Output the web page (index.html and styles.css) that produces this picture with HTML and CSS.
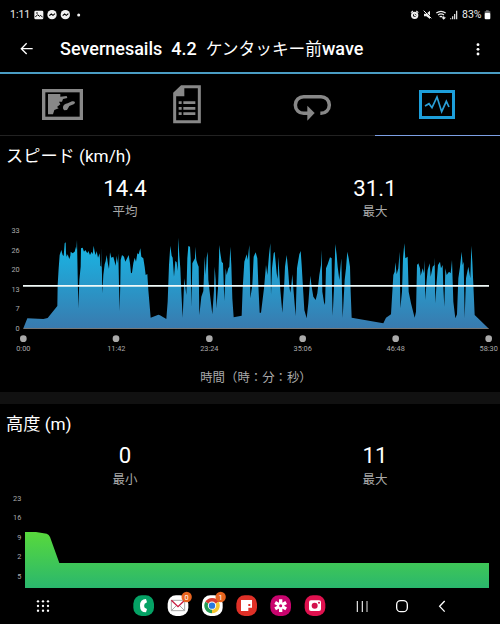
FILE: index.html
```html
<!DOCTYPE html>
<html lang="ja">
<head>
    <meta charset="UTF-8">
    <meta name="viewport" content="width=device-width, initial-scale=1.0">
    <title>Severnesails</title>
    <link rel="stylesheet" href="styles.css">
</head>
<body>
    <div class="status-bar">
        <span class="clock">1:11</span>
        <svg class="status-left" width="50" height="12" viewBox="0 0 150 36">
            <rect x="1" y="5" width="27" height="26" rx="4" fill="#f2f2f2"/>
            <path d="M4 24l7-7 5 5 4-3 6 6" fill="none" stroke="#000" stroke-width="3"/>
            <circle cx="9" cy="12" r="2.5" fill="#000"/>
            <circle cx="54" cy="17" r="14" fill="#f2f2f2"/>
            <path d="M46 20l6-5 5 4 6-5" fill="none" stroke="#000" stroke-width="3.5"/>
            <circle cx="94" cy="17" r="14" fill="#f2f2f2"/>
            <path d="M86 20l6-5 5 4 6-5" fill="none" stroke="#000" stroke-width="3.5"/>
            <circle cx="134" cy="18" r="4.5" fill="#f2f2f2"/>
        </svg>
        <svg class="status-right" width="50" height="12" viewBox="0 0 150 36">
            <g fill="none" stroke="#eee" stroke-width="3.5">
                <circle cx="14" cy="19" r="8" stroke-width="6"/>
                <path d="M3 11l6-5M25 11l-6-5M14 15v5h4"/>
                <path d="M79 12q14-10 28 0M84 18q9-7 18 0M89 24q4-4 8 0"/>
                <path d="M101 22v8M97 25l4 5 5-5"/>
                <path d="M122 31v-3M128 31v-9M134 31V15M140 31V5"/>
            </g>
            <path d="M42 14h7l11-9v25l-11-8h-7z" fill="#eee"/>
            <path d="M43 5l23 23" stroke="#000" stroke-width="3"/>
            <path d="M41 5l23 23" stroke="#eee" stroke-width="3"/>
        </svg>
        <span class="battery">83%</span>
        <svg class="battery-icon" width="7" height="10" viewBox="0 0 21 30">
            <path d="M6 1h8v3h5v7H2V4h4z" fill="#777"/>
            <rect x="2" y="9" width="17" height="19" rx="3" fill="#fff"/>
        </svg>
    </div>

    <div class="app-bar">
        <svg class="back" width="14" height="14" viewBox="0 0 42 42">
            <path d="M38 20H4M20 4L4 20l16 16" fill="none" stroke="#fff" stroke-width="4"/>
        </svg>
        <h1><span class="latin">Severnesails  4.2  </span>ケンタッキー前<span class="latin wave">wave</span></h1>
        <svg class="more" width="4" height="13" viewBox="0 0 12 39">
            <g fill="#fff"><circle cx="6" cy="5" r="4.3"/><circle cx="6" cy="19" r="4.3"/><circle cx="6" cy="33" r="4.3"/></g>
        </svg>
    </div>

    <div class="tabs">
        <div class="tab">
            <svg width="125" height="61" viewBox="0 12 375 183">
                <rect x="131" y="62" width="113" height="83" fill="none" stroke="#888" stroke-width="10"/>
                <path d="M144 72h37v8l19-2 2 6-13 3-3 8h-9l4 8-10 8 5 4-13 5-4 13h-15z" fill="#888"/>
                <path d="M189 111q2-9 14-11l13-6q10-2 9 5l-4 4-13 5-7 12-8 1q-5-3-4-10z" fill="#888"/>
            </svg>
        </div>
        <div class="tab">
            <svg width="125" height="61" viewBox="375 12 375 183">
                <path d="M545 50h53v105h-74V70z" fill="none" stroke="#888" stroke-width="9"/>
                <path d="M523 71l24-22h6v30h-30z" fill="#888"/>
                <path d="M550 98h36M550 115h36M550 131h36M536 98h9M536 115h9M536 131h9" stroke="#888" stroke-width="8"/>
            </svg>
        </div>
        <div class="tab">
            <svg width="125" height="61" viewBox="0 12 375 183">
                <path d="M174 130h-13a25 25 0 0 1 0-50h52a25 25 0 0 1 0 50h-2" fill="none" stroke="#888" stroke-width="10.5"/>
                <path d="M172 107l22 22-22 23z" fill="#888"/>
            </svg>
        </div>
        <div class="tab active">
            <svg width="125" height="61" viewBox="375 12 375 183">
                <rect x="511.500" y="64.500" width="99" height="78" fill="none" stroke="#1d9fdb" stroke-width="9"/>
                <path d="M525 108l12-7 9 12 15-32 14 44 14-31 8 17" fill="none" stroke="#2a9fd8" stroke-width="5"/>
            </svg>
        </div>
    </div>

    <div class="section">
        <h2>スピード (km/h)</h2>
        <div class="stats">
            <div class="stat"><b>14.4</b><span>平均</span></div>
            <div class="stat"><b>31.1</b><span>最大</span></div>
        </div>
        <svg class="chart" width="500" height="135" viewBox="0 0 1500 405">
            <defs>
                <linearGradient id="blue" gradientUnits="userSpaceOnUse" x1="0" y1="50" x2="0" y2="310">
                    <stop offset="0" stop-color="#17b7e6"/>
                    <stop offset="1" stop-color="#397aae"/>
                </linearGradient>
            </defs>
            <g fill="url(#blue)">
                <path d="M70 310L82 280 130 282 143 279 172 243 173 180 176 130 179 90 184 75 188 90 191 93 194 55 197 52 198 85 200 95 203 88 208 102 211 92 212 80 218 85 224 80 228 65 229 75 231 45 233 150 235 250 238 165 242 125 243 70 248 68 252 80 256 75 262 85 265 78 270 90 275 80 278 88 281 62 284 80 287 90 290 78 294 98 299 85 301 122 304 125 304 68 306 150 307 205 310 150 314 118 317 108 320 90 324 118 327 132 330 82 334 98 340 95 344 110 347 122 350 92 353 115 355 85 357 180 359 258 361 170 362 105 366 90 372 95 376 110 382 98 386 90 390 115 393 145 396 143 400 115 404 98 408 110 412 85 416 88 421 70 424 95 430 100 434 125 437 150 442 147 445 195 448 230 452 278 475 269 480 271V310z"/>
                <path transform="translate(480)" d="M0 310V271L19 282 23 230 27 120 31 62 35 92 38 98 42 155 46 108 50 112 53 138 55 38 58 92 61 130 64 200 68 278 73 160 79 210 82 100 85 63 90 65 92 100 94 245 97 115 105 100 106 65 109 105 113 118 116 125 118 270 124 215 130 198 134 95 137 150 140 98 143 80 145 165 149 200 157 268 162 195 164 125 167 165 169 250 174 190 176 130 178 60 181 85 185 110 189 115 193 228 197 130 200 150 205 130 208 125 211 65 214 120 217 220 221 277 245 272 248 190 253 110 260 88 263 105 268 60 270 150 271 220 277 180 281 95 287 82 292 100 295 180 299 263 303 263 312 190 318 120 322 150 327 90 331 55 333 210 336 130 341 85 344 80 350 145 353 162 355 95 358 145 361 195 367 263 373 170 375 125 380 90 384 130 388 185 391 203 394 180 397 148 400 190 407 273 411 130 418 88 422 78 425 120 430 205 433 255 440 280 445 235 451 152 455 185 460 215 467 225 472 205 478 150 483 120 485 75 487 200 492 232 495 240 498 130 503 118 510 97V310z"/>
                <path transform="translate(990)" d="M0 310V97L5 100 6 200 8 272 12 190 16 57 20 90 23 125 28 165 34 100 36 200 38 278 44 165 48 130 52 80 56 100 60 125 62 200 65 278 160 295 168 278 183 268 187 200 190 150 194 140 196 112 200 148 205 130 209 80 211 250 216 200 219 100 223 55 226 100 233 95 236 200 243 235 254 278 258 260 261 120 265 115 270 130 272 152 278 130 282 145 284 105 286 225 290 165 293 135 299 115 302 155 308 125 313 120 314 98 316 235 320 170 324 120 330 110 333 130 338 120 340 190 343 245 346 130 350 150 357 140 362 145 366 105 370 230 376 280 381 268 385 160 390 125 395 80 398 120 401 110 404 280 408 160 415 125 421 160 424 62 427 110 431 200 434 270 475 310z"/>
            </g>
            <path d="M70 310.500H1466" stroke="#777" stroke-width="3"/>
            <path d="M69 182.500H1467" stroke="#f1faf8" stroke-width="5"/>
            <g fill="#aaa">
                <circle cx="70" cy="341" r="10"/><circle cx="348" cy="341" r="10"/><circle cx="628" cy="341" r="10"/>
                <circle cx="908" cy="341" r="10"/><circle cx="1187" cy="341" r="10"/><circle cx="1466" cy="341" r="10"/>
            </g>
            <g class="y-labels">
                <text x="59" y="24">33</text><text x="59" y="83">26</text><text x="59" y="142">20</text>
                <text x="59" y="201">13</text><text x="59" y="259">7</text><text x="59" y="318">0</text>
            </g>
            <g class="x-labels">
                <text x="70" y="378">0:00</text><text x="349" y="378">11:42</text><text x="628" y="378">23:24</text>
                <text x="908" y="378">35:06</text><text x="1187" y="378">46:48</text><text x="1466" y="378">58:30</text>
            </g>
        </svg>
        <div class="axis-title">時間（時：分：秒）</div>
    </div>

    <div class="section altitude">
        <h2>高度 (m)</h2>
        <div class="stats">
            <div class="stat"><b>0</b><span>最小</span></div>
            <div class="stat"><b>11</b><span>最大</span></div>
        </div>
        <svg class="chart" width="500" height="103" viewBox="0 0 1500 309">
            <defs>
                <linearGradient id="green" gradientUnits="userSpaceOnUse" x1="0" y1="141" x2="0" y2="309">
                    <stop offset="0" stop-color="#58d93c"/>
                    <stop offset="1" stop-color="#2ab76d"/>
                </linearGradient>
            </defs>
            <path d="M75 309V141H108L140 146Q147 148 150 156L178 234H1467V309z" fill="url(#green)"/>
            <g class="y-labels">
                <text x="64" y="47">23</text><text x="64" y="106">16</text><text x="64" y="165">9</text>
                <text x="64" y="223">2</text><text x="64" y="283">5</text>
            </g>
        </svg>
    </div>

    <div class="nav-bar">
        <svg width="500" height="36" viewBox="0 309 1500 108">
            <g fill="#fff">
                <circle cx="114" cy="349" r="3.500"/><circle cx="129" cy="349" r="3.500"/><circle cx="144" cy="349" r="3.500"/>
                <circle cx="114" cy="363" r="3.500"/><circle cx="129" cy="363" r="3.500"/><circle cx="144" cy="363" r="3.500"/>
                <circle cx="114" cy="377" r="3.500"/><circle cx="129" cy="377" r="3.500"/><circle cx="144" cy="377" r="3.500"/>
            </g>
            <!-- phone -->
            <rect x="400" y="331" width="62" height="62" rx="25" fill="#05a265"/>
            <path d="M438 342q-18 0-18 20t18 20l3-10-7-4q-3-6 0-12l7-4z" fill="#fff"/>
            <!-- mail -->
            <rect x="503" y="331" width="62" height="62" rx="25" fill="#fff"/>
            <path d="M514 346h40v31h-40zM514 377l15-15M554 377l-15-15" fill="none" stroke="#aaa" stroke-width="3"/>
            <path d="M514 346l20 19 20-19" fill="none" stroke="#c8193f" stroke-width="4"/>
            <!-- chrome -->
            <rect x="606" y="331" width="62" height="62" rx="25" fill="#fff"/>
            <path d="M636 362L616 350.500A23 23 0 0 1 656 350.500z" fill="#d83b30"/>
            <path d="M636 362L656 350.500A23 23 0 0 1 636 385z" fill="#f6c52e"/>
            <path d="M636 362L636 385A23 23 0 0 1 616 350.500z" fill="#259a52"/>
            <path d="M636 350h22v-2l-8-7h-14z" fill="#d83b30"/>
            <circle cx="636" cy="362" r="12.500" fill="#fff"/>
            <circle cx="636" cy="362" r="9.500" fill="#2878df"/>
            <!-- flipboard -->
            <rect x="709" y="331" width="62" height="62" rx="25" fill="#df3027"/>
            <path d="M723 345h33v23h-11v10h-22z" fill="#fff"/>
            <path d="M745 357h6v6h-6z" fill="#df3027"/>
            <!-- gallery -->
            <rect x="811" y="331" width="62" height="62" rx="25" fill="#c9046e"/>
            <path d="M842 343v38M825.500 352.500l33 19M825.500 371.500l33-19" stroke="#fff" stroke-width="10"/>
            <circle cx="842" cy="362" r="4.500" fill="#c9046e"/>
            <!-- camera -->
            <rect x="914" y="331" width="62" height="62" rx="25" fill="#e0114f"/>
            <rect x="927" y="346" width="36" height="32" rx="6" fill="#fff"/>
            <circle cx="944" cy="362" r="9" fill="#d3104c"/>
            <circle cx="957" cy="353" r="3" fill="#d3104c"/>
            <g fill="#e7641f"><circle cx="560" cy="336" r="15.500"/><circle cx="662" cy="336" r="15.500"/></g>
            <g class="badges"><text x="560" y="344">0</text><text x="662" y="344">1</text></g>
            <path d="M1072 348v33M1087 348v33" stroke="#eee" stroke-width="3.500"/>
            <path d="M1101 348v33" stroke="#888" stroke-width="5"/>
            <rect x="1190" y="347" width="32" height="33" rx="12" fill="none" stroke="#fff" stroke-width="4"/>
            <path d="M1334 348l-15 16 15 16" fill="none" stroke="#fff" stroke-width="4"/>
        </svg>
    </div>
</body>
</html>
```
FILE: styles.css
```css
* {box-sizing: border-box;}
body {margin: 0; width: 500px; height: 624px; overflow: hidden; background: #000; color: #fff; font-family: Roboto, "Noto Sans CJK JP", sans-serif; display: flex; flex-direction: column;}
svg {display: block; flex: none;}
h1, h2 {margin: 0; font-weight: 400; white-space: pre;}

.status-bar {height: 28px; padding: 1px 9px 0 10px; display: flex; align-items: center; font-size: 10.5px; color: #eee;}
.clock {width: 24px;}
.status-right {margin-left: auto;}
.battery {margin-left: 2px; width: 21px;}
.battery-icon {margin-left: 1px;}

.app-bar {height: 46px; padding: 0 20px 2px; display: flex; align-items: center; border-bottom: 2px solid #4a9dc4;}
.app-bar h1 {margin-left: 26px; font-size: 16.7px; line-height: 24px;}
.latin {font-size: 18px; font-weight: 500;}
.more {margin-left: auto;}

.tabs {height: 62px; display: flex;}
.tab {width: 125px; border-bottom: 1px solid #222;}
.tab.active {border-bottom-color: #7c9fe4;}

.section {height: 256px; border-bottom: 0; display: flex; flex-direction: column;}
.section h2 {padding: 7px 6px 0; height: 36px; font-size: 17.2px; line-height: 26px;}
.stats {display: flex; height: 53px;}
.stat {width: 250px; display: flex; flex-direction: column; align-items: center;}
.stat b {font-size: 22.2px; font-weight: 400; line-height: 32px;}
.stat span {font-size: 12.5px; line-height: 15px; color: #aaa;}
.y-labels, .x-labels {fill: #aaa; font-size: 22px;}
.y-labels {text-anchor: end;}
.x-labels {text-anchor: middle;}
.axis-title {margin-left: 23px; width: 466px; padding-top: 8px; text-align: center; font-size: 12.4px; line-height: 20px; color: #aaa;}

.altitude {height: 196px; border-top: 12px solid #111;}
.altitude h2 {height: 35px;}
.altitude .stats {height: 46px;}
.altitude .stat span {line-height: 17px;}

.nav-bar {height: 36px; background: #000;}
.badges {fill: #fff; font-size: 22px; text-anchor: middle;}
```
